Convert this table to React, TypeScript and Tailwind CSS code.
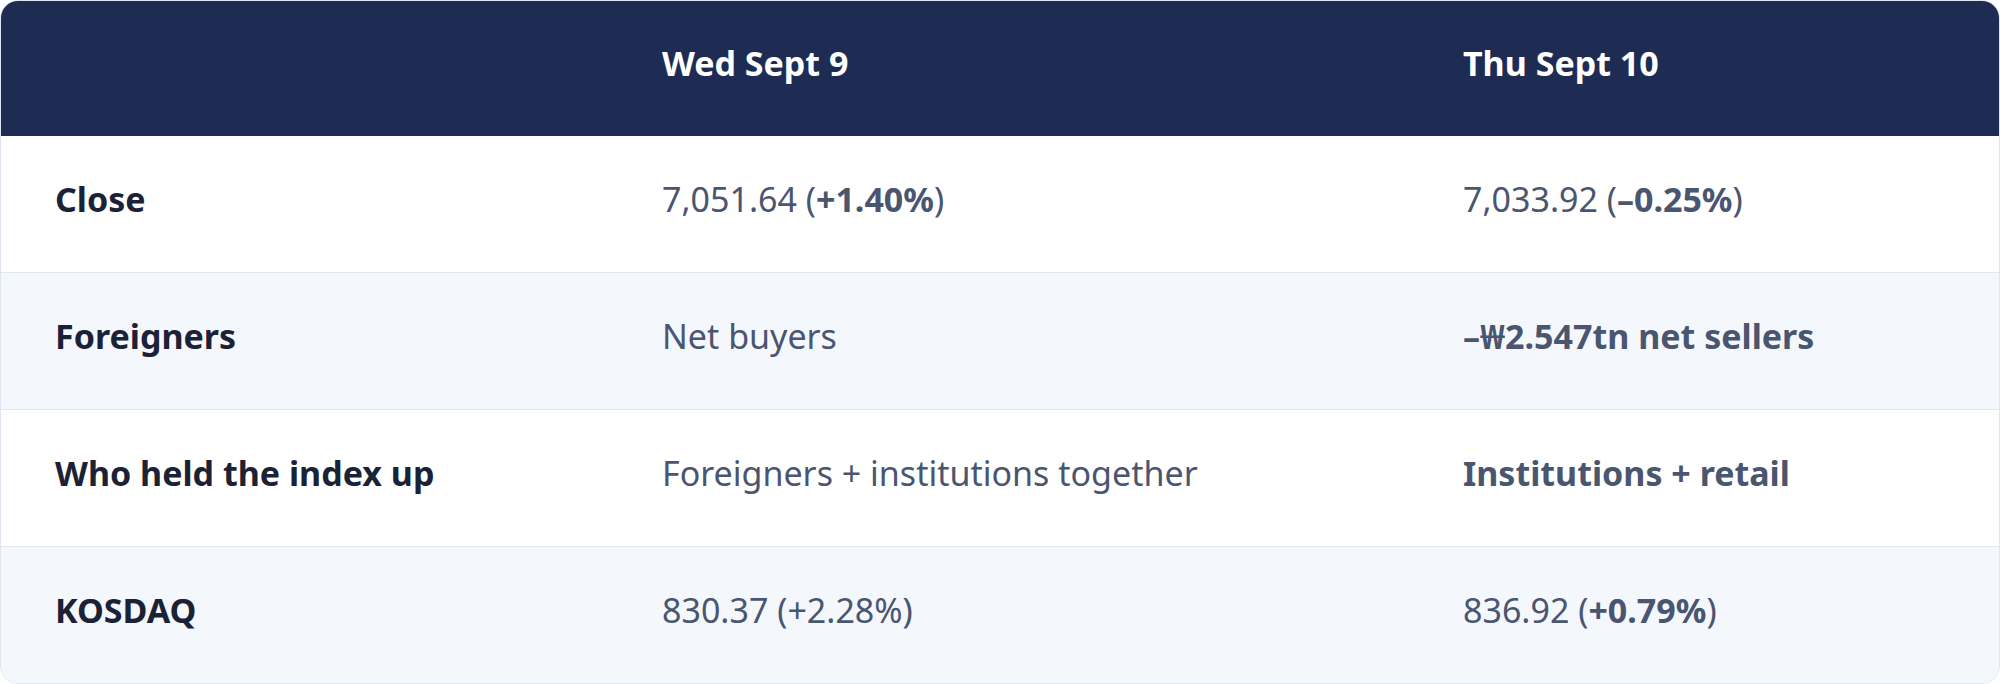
import type { ReactNode } from "react";

interface Row {
  label: string;
  wed: ReactNode;
  thu: ReactNode;
}

const rows: Row[] = [
  {
    label: "Close",
    wed: (
      <>
        7,051.64 (<b className="font-bold">+1.40%</b>)
      </>
    ),
    thu: (
      <>
        7,033.92 (<b className="font-bold">–0.25%</b>)
      </>
    ),
  },
  {
    label: "Foreigners",
    wed: "Net buyers",
    thu: <b className="font-bold">–₩2.547tn net sellers</b>,
  },
  {
    label: "Who held the index up",
    wed: "Foreigners + institutions together",
    thu: <b className="font-bold">Institutions + retail</b>,
  },
  {
    label: "KOSDAQ",
    wed: "830.37 (+2.28%)",
    thu: (
      <>
        836.92 (<b className="font-bold">+0.79%</b>)
      </>
    ),
  },
];

const cols = "grid grid-cols-[607px_801px_1fr] items-center pb-[9px]";

export default function App() {
  return (
    <div className="h-[684px] w-[2000px] bg-white font-['Noto_Sans','Noto_Sans_CJK_KR',sans-serif] text-[34px] leading-[1.4]">
      <div className="overflow-hidden rounded-[18px] border border-[#dfe6f1]">
        {/* header */}
        <div className={`${cols} h-[135px] bg-[#1e2c54] font-bold text-white`}>
          <div />
          <div className="pl-[54px]">Wed Sept 9</div>
          <div className="pl-[54px]">Thu Sept 10</div>
        </div>

        {rows.map((row, i) => (
          <div
            key={row.label}
            className={`${cols} ${
              i === 0 ? "h-[136px]" : "h-[137px] border-t border-[#dfe6f1]"
            } ${i % 2 === 1 ? "bg-[#f4f7fc]" : "bg-white"}`}
          >
            <div className="pl-[54px] font-bold text-[#1b2235]">{row.label}</div>
            <div className="pl-[54px] text-[#4a5570]">{row.wed}</div>
            <div className="pl-[54px] text-[#4a5570]">{row.thu}</div>
          </div>
        ))}
      </div>
    </div>
  );
}
